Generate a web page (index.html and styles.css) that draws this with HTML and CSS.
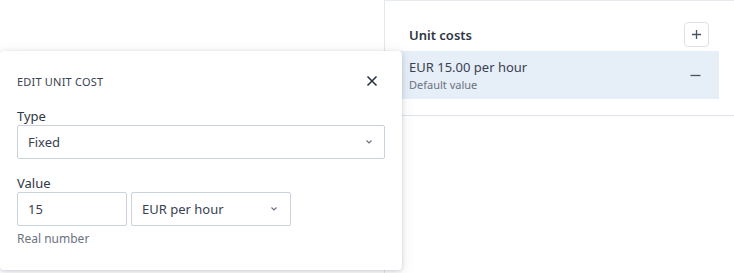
FILE: index.html
```html
<!DOCTYPE html>
<html lang="en">
<head>
    <meta charset="UTF-8">
    <title>Unit costs</title>
    <link rel="stylesheet" href="styles.css">
</head>
<body>
    <div class="page">
        <div class="main"></div>
        <div class="side">
            <div class="side-head">
                <span class="side-title">Unit costs</span>
                <button class="icon-btn" title="Add">
                    <svg width="11" height="11" viewBox="0 0 11 11"><path d="M5.5 1v9M1 5.5h9" stroke="#4a5262" stroke-width="1.3" fill="none"/></svg>
                </button>
            </div>
            <div class="cost-row">
                <div>
                    <div class="cost-value">EUR 15.00 per hour</div>
                    <div class="cost-note">Default value</div>
                </div>
                <svg class="cost-remove" width="11" height="11" viewBox="0 0 11 11"><path d="M0.5 5.5h10" stroke="#4a5262" stroke-width="1.3" fill="none"/></svg>
            </div>
            <div class="side-rule"></div>
        </div>
    </div>

    <!-- Edit popover -->
    <div class="popover">
        <div class="popover-head">
            <span class="popover-title">Edit unit cost</span>
            <svg width="12" height="12" viewBox="0 0 12 12"><path d="M1.5 1.5l9 9M10.5 1.5l-9 9" stroke="#2d3440" stroke-width="1.6" fill="none"/></svg>
        </div>
        <div class="field">
            <label class="field-label">Type</label>
            <div class="select wide">
                <span>Fixed</span>
                <svg width="10" height="6" viewBox="0 0 10 6"><path d="M2.5 1.5l2.5 2.5 2.5-2.5" stroke="#6b7482" stroke-width="1.2" fill="none"/></svg>
            </div>
        </div>
        <div class="field">
            <label class="field-label">Value</label>
            <div class="value-row">
                <div class="input">15</div>
                <div class="select unit">
                    <span>EUR per hour</span>
                    <svg width="10" height="6" viewBox="0 0 10 6"><path d="M2.5 1.5l2.5 2.5 2.5-2.5" stroke="#6b7482" stroke-width="1.2" fill="none"/></svg>
                </div>
            </div>
            <div class="hint">Real number</div>
        </div>
    </div>
</body>
</html>
```

FILE: styles.css
```css
body {
    margin: 0;
    font-family: "Noto Sans", sans-serif;
    color: #2f3644;
    background: #fff;
    width: 734px;
    height: 273px;
    overflow: hidden;
    position: relative;
}
.page {
    display: flex;
    height: 273px;
}
.main {
    width: 384px;
}
.side {
    flex: 1;
    border-left: 1px solid #e3e7ee;
    border-top: 1px solid #e8ebf0;
    background: #fff;
}
.side-head {
    display: flex;
    justify-content: space-between;
    align-items: center;
    padding: 21px 25px 4px 24px;
}
.side-title {
    font-size: 13px;
    font-weight: 600;
}
.icon-btn {
    width: 25px;
    height: 25px;
    border: 1px solid #dde2ea;
    border-radius: 4px;
    background: #fff;
    display: flex;
    align-items: center;
    justify-content: center;
    padding: 0;
}
.cost-row {
    margin: 0 15px 0 15px;
    background: #e6eef8;
    height: 48px;
    padding: 0 18px 0 9px;
    display: flex;
    align-items: center;
    justify-content: space-between;
}
.cost-value {
    font-size: 13px;
    color: #3a4150;
}
.cost-note {
    font-size: 11px;
    color: #6b7280;
    margin-top: 1px;
}
.side-rule {
    margin: 16px 0 0 15px;
    border-top: 1px solid #dfe4eb;
}

/* Popover */
.popover {
    position: absolute;
    left: 0;
    top: 51px;
    width: 368px;
    height: 219px;
    padding: 0 17px;
    background: #fff;
    border-radius: 4px;
    box-shadow: 0 1px 4px rgba(40, 50, 70, 0.18), 0 2px 14px rgba(40, 50, 70, 0.1);
}
.popover-head {
    display: flex;
    justify-content: space-between;
    align-items: center;
    padding: 22px 7px 0 0;
    height: 16px;
}
.popover-title {
    font-size: 11px;
    text-transform: uppercase;
    letter-spacing: 0.2px;
    color: #3a4150;
}
.field {
    margin-top: 19px;
}
.field + .field {
    margin-top: 16px;
}
.field-label {
    display: block;
    font-size: 13px;
    line-height: 17px;
    color: #2f3644;
}
.select, .input {
    box-sizing: border-box;
    height: 34px;
    border: 1px solid #c9d2dd;
    border-radius: 2px;
    font-size: 13px;
    color: #3a4150;
    display: flex;
    align-items: center;
    justify-content: space-between;
    padding: 0 10px 0 10px;
}
.select.wide {
    width: 368px;
}
.value-row {
    display: flex;
    gap: 4px;
}
.input {
    width: 110px;
}
.select.unit {
    width: 160px;
    padding-right: 11px;
}
.hint {
    font-size: 12px;
    color: #6b7280;
    margin-top: 4px;
}
```
